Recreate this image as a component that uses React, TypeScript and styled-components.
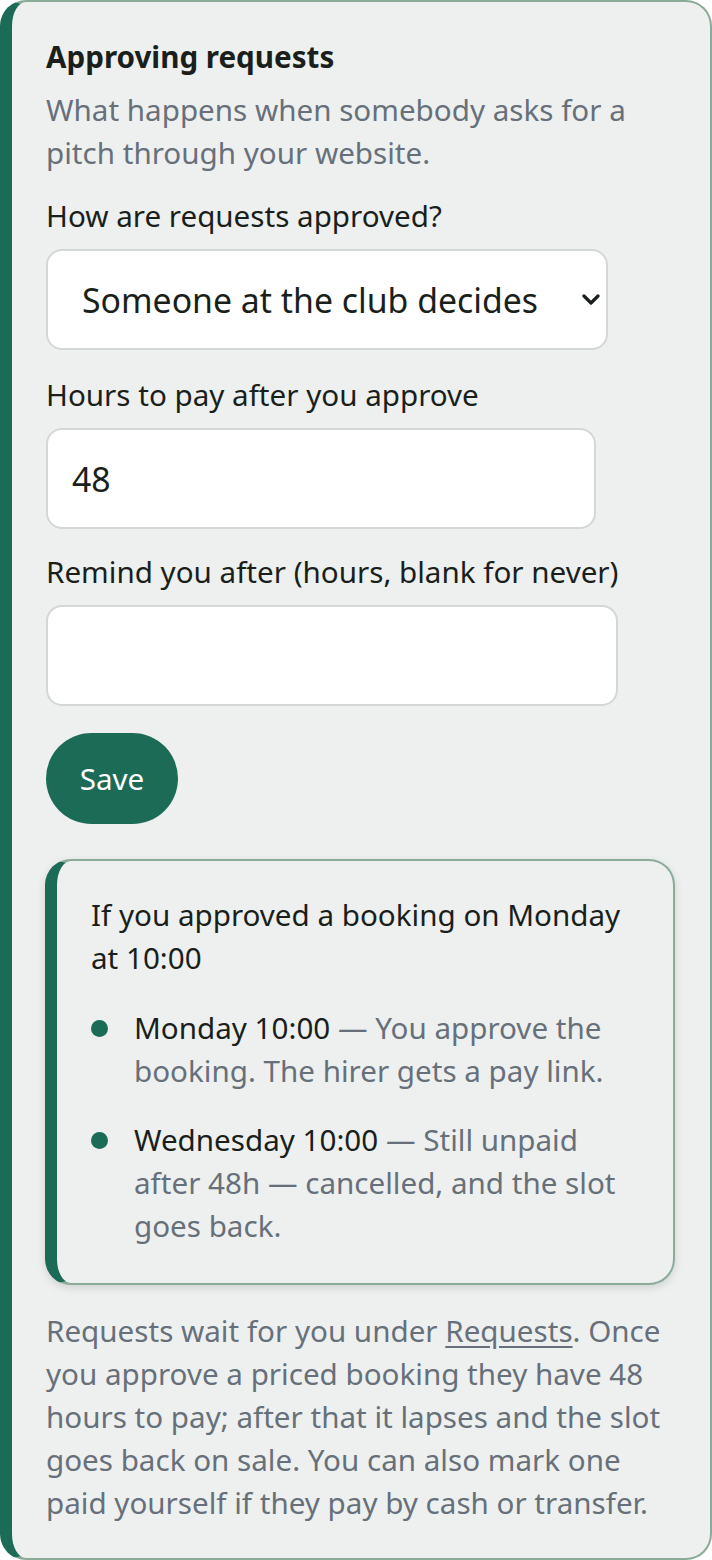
import React from 'react';
import styled, { createGlobalStyle } from 'styled-components';

const GlobalStyle = createGlobalStyle`
  * { box-sizing: border-box; }
  body {
    margin: 0;
    background: #ffffff;
    font-family: "Noto Sans", "Open Sans", sans-serif;
  }
`;

const Card = styled.section`
  width: 712px;
  min-height: 1560px;
  background: #edf0ef;
  border: 2px solid #8aab98;
  border-left: 12px solid #1b6b56;
  border-radius: 26px;
  padding: 34px 33px 34px 34px;
  color: #1a1f1c;
`;

const Heading = styled.h2`
  margin: 0;
  font-size: 29.6px;
  font-weight: 700;
  line-height: 42px;
`;

const Muted = styled.p`
  margin: 10px 0 0;
  font-size: 29.6px;
  line-height: 43px;
  color: #67707a;
`;

const Field = styled.div<{ $top: number }>`
  margin-top: ${p => p.$top}px;
  display: flex;
  flex-direction: column;
  align-items: flex-start;
  gap: 12px;
`;

const Label = styled.label`
  font-size: 29.6px;
  line-height: 42px;
`;

const SelectWrap = styled.div`
  position: relative;
  display: inline-block;
`;

const SelectBox = styled.select<{ $w: number }>`
  appearance: none;
  width: ${p => p.$w}px;
  height: 101px;
  border: 2px solid #d3d8d5;
  border-radius: 16px;
  background: #ffffff;
  font-family: inherit;
  font-size: 33.8px;
  color: #1a1f1c;
  padding: 0 40px 0 34px;
`;

const Chevron = styled.svg`
  position: absolute;
  right: 8px;
  top: 45px;
  width: 18px;
  height: 11px;
  pointer-events: none;
`;

const TextInput = styled.input<{ $w: number }>`
  width: ${p => p.$w}px;
  height: 101px;
  border: 2px solid #d3d8d5;
  border-radius: 16px;
  background: #ffffff;
  font-family: inherit;
  font-size: 33.8px;
  color: #1a1f1c;
  padding: 0 24px;
`;

const SaveButton = styled.button`
  margin-top: 27px;
  width: 132px;
  height: 91px;
  border: none;
  border-radius: 46px;
  background: #1b6b56;
  color: #ffffff;
  font-family: inherit;
  font-size: 29.6px;
`;

const Example = styled.div`
  margin-top: 35px;
  width: 630px;
  margin-left: -1px;
  background: #edf0ef;
  border: 2px solid #8aab98;
  border-left: 12px solid #1b6b56;
  border-radius: 26px;
  box-shadow: 0 3px 8px rgba(0, 0, 0, 0.12);
  padding: 32px 28px 36px 34px;
`;

const ExampleTitle = styled.p`
  margin: 0;
  font-size: 29.6px;
  line-height: 43px;
`;

const Steps = styled.ul`
  list-style: none;
  margin: 27px 0 0;
  padding: 0;
  display: flex;
  flex-direction: column;
  gap: 26px;
`;

const Step = styled.li`
  position: relative;
  padding-left: 43px;
  font-size: 29.6px;
  line-height: 43px;
  color: #67707a;

  &::before {
    content: "";
    position: absolute;
    left: 0;
    top: 14px;
    width: 17px;
    height: 17px;
    border-radius: 50%;
    background: #1b6b56;
  }
`;

const When = styled.span`
  color: #1a1f1c;
`;

const Footer = styled(Muted)`
  margin-top: 24px;
`;

const Link = styled.a`
  color: inherit;
  text-decoration: underline;
  text-underline-offset: 4px;
`;

export default function App() {
  return (
    <>
      <GlobalStyle />
      <Card>
        <Heading>Approving requests</Heading>
        <Muted>What happens when somebody asks for a pitch through your website.</Muted>

        <Field $top={21}>
          <Label>How are requests approved?</Label>
          <SelectWrap>
            <SelectBox $w={562} defaultValue="club">
              <option value="club">Someone at the club decides</option>
              <option value="auto">Approved automatically</option>
            </SelectBox>
            <Chevron viewBox="0 0 18 11" fill="none">
              <path d="M2 2l7 7 7-7" stroke="#1a1f1c" strokeWidth="3.2" strokeLinecap="round" strokeLinejoin="round" />
            </Chevron>
          </SelectWrap>
        </Field>

        <Field $top={24}>
          <Label>Hours to pay after you approve</Label>
          <TextInput $w={550} defaultValue="48" />
        </Field>

        <Field $top={22}>
          <Label>Remind you after (hours, blank for never)</Label>
          <TextInput $w={572} defaultValue="" />
        </Field>

        <SaveButton>Save</SaveButton>

        <Example>
          <ExampleTitle>If you approved a booking on Monday at 10:00</ExampleTitle>
          <Steps>
            <Step>
              <When>Monday 10:00</When> — You approve the booking. The hirer gets a pay link.
            </Step>
            <Step>
              <When>Wednesday 10:00</When> — Still unpaid after 48h — cancelled, and the slot goes back.
            </Step>
          </Steps>
        </Example>

        <Footer>
          Requests wait for you under <Link href="#">Requests</Link>. Once you approve a priced
          booking they have 48 hours to pay; after that it lapses and the slot goes back on sale.
          You can also mark one paid yourself if they pay by cash or transfer.
        </Footer>
      </Card>
    </>
  );
}
